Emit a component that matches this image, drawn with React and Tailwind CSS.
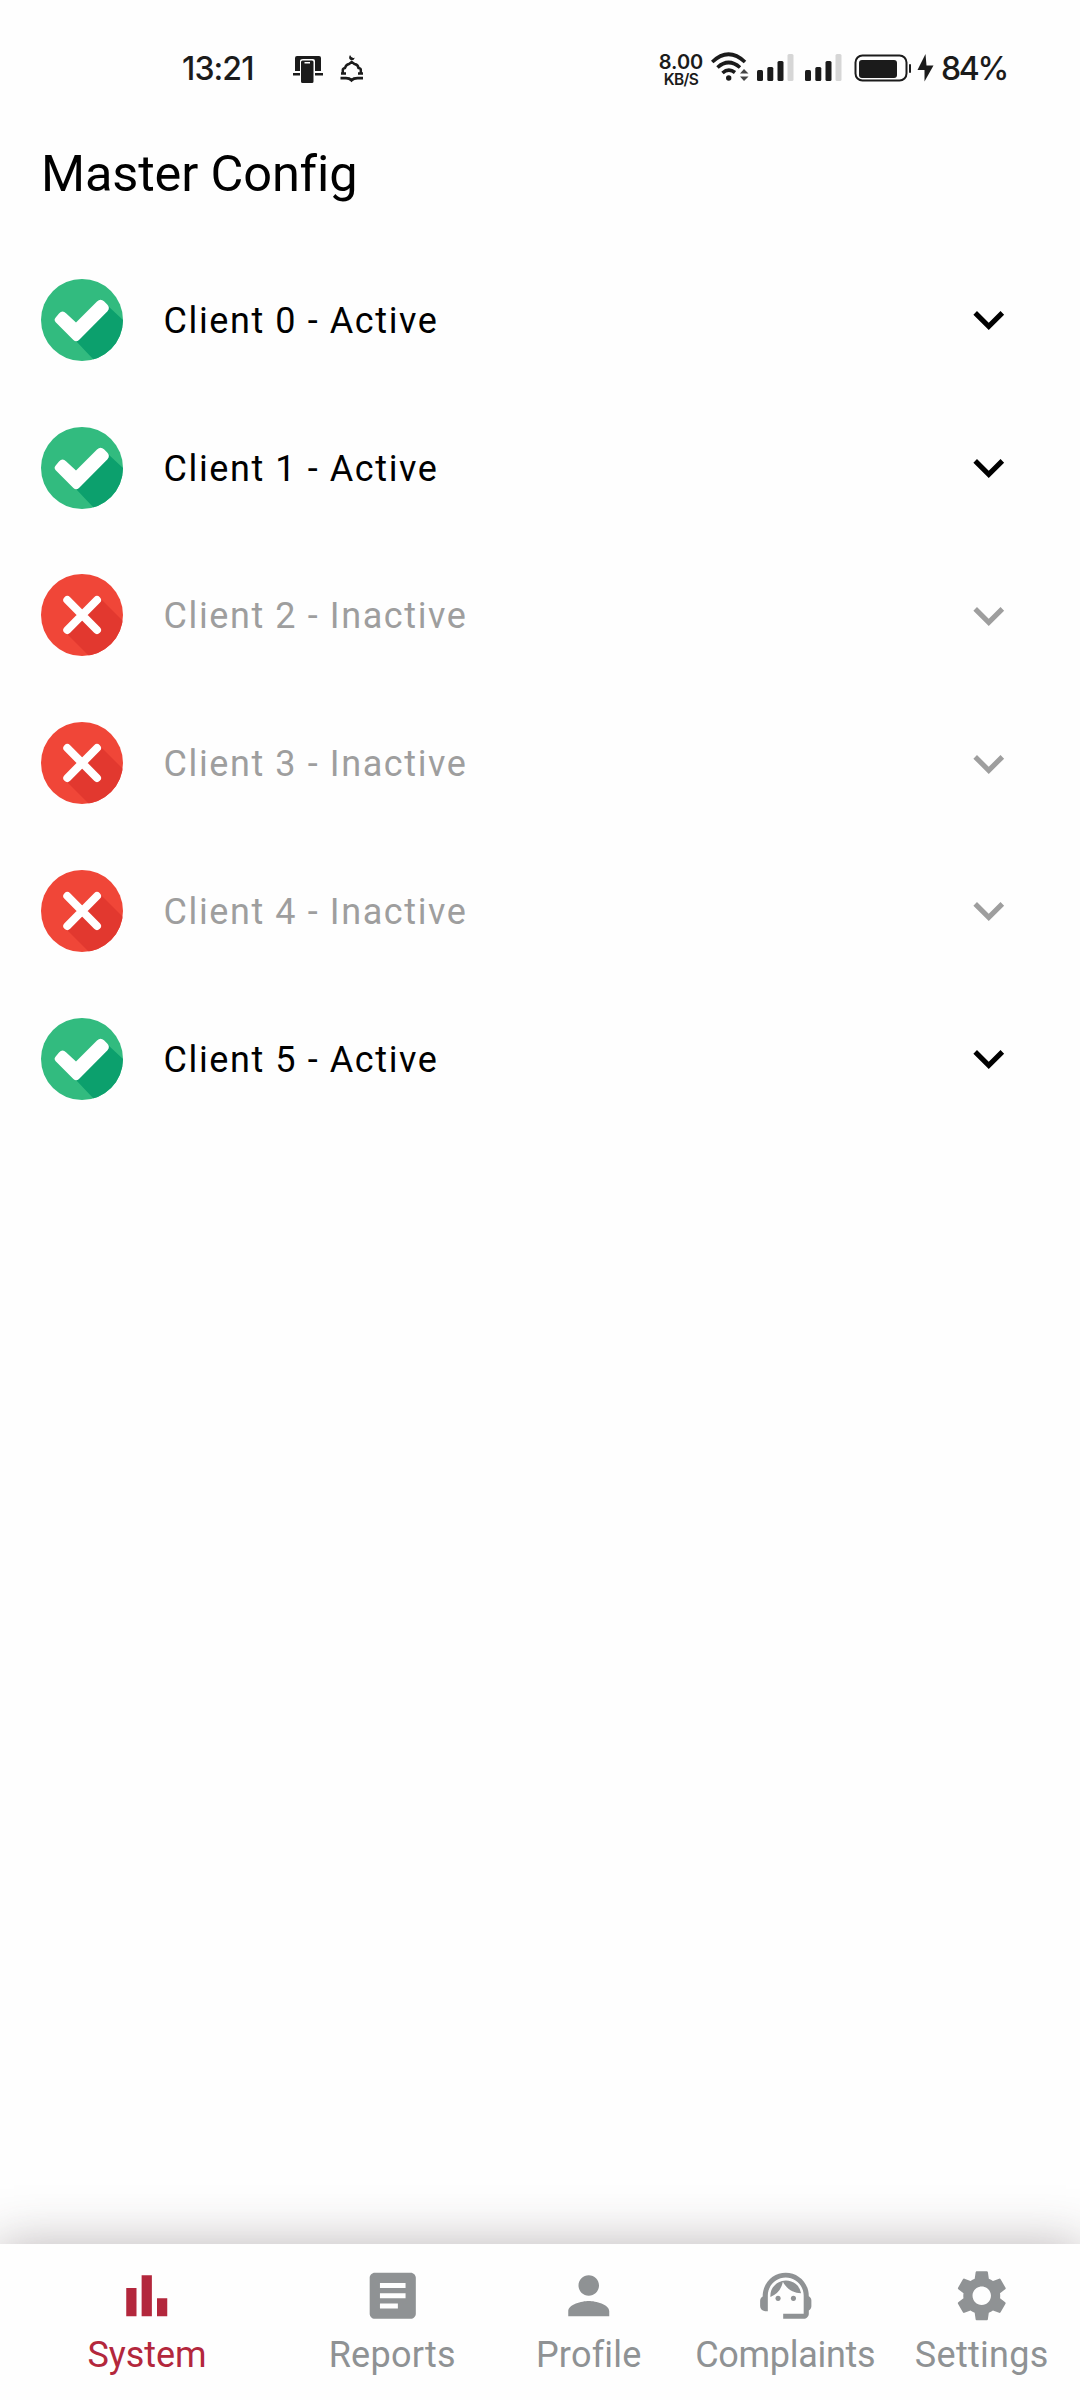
import React from "react";
import {
  MdArticle,
  MdBarChart,
  MdExpandMore,
  MdPerson,
  MdSettings,
  MdSupportAgent,
} from "react-icons/md";

const clients = [true, true, false, false, false, true];

const tabs = [
  { label: "System", Icon: MdBarChart, box: "w-[294px] text-[#b3273c]", text: "tracking-[-0.100px]" },
  { label: "Reports", Icon: MdArticle, box: "w-[196.5px]", text: "tracking-[0.250px]" },
  { label: "Profile", Icon: MdPerson, box: "w-[196.5px]", text: "tracking-[0.200px]" },
  { label: "Complaints", Icon: MdSupportAgent, box: "w-[196.5px]", text: "tracking-[-0.300px]" },
  { label: "Settings", Icon: MdSettings, box: "w-[196.5px]", text: "tracking-[0.300px]" },
];

function ActiveBadge() {
  return (
    <svg viewBox="0 0 82 82" className="size-[82px] shrink-0">
      <defs>
        <clipPath id="disc">
          <circle cx="41" cy="41" r="41" />
        </clipPath>
      </defs>
      <g clipPath="url(#disc)">
        <rect width="82" height="82" fill="#32bb7f" />
        <path d="M35 62L52 80L60 90L100 60L82 41L67 27Z" fill="#0ca06d" />
      </g>
      <path
        d="M14.700 43.2Q12.500 41 14.700 38.6L18 34.4Q21.500 30.8 25 34.2L35 43.5L56 22.5Q59.500 19 63 22.200L66 25.300Q69.500 28.800 66.500 32.200L38 61Q35.200 63.500 32.400 61Z"
        fill="#fff"
      />
    </svg>
  );
}

function InactiveBadge() {
  return (
    <svg viewBox="0 0 82 82" className="size-[82px] shrink-0">
      <defs>
        <clipPath id="disc-off">
          <circle cx="41" cy="41" r="41" />
        </clipPath>
      </defs>
      <g clipPath="url(#disc-off)">
        <rect width="82" height="82" fill="#f04638" />
        <path d="M25 59L48 82L90 90L90 55L59 24L41 41Z" fill="#e2382f" />
      </g>
      <path d="M26.300 26L56 56M56 26L26.300 56" stroke="#fff" strokeWidth="8" strokeLinecap="round" />
    </svg>
  );
}

function Signal() {
  return (
    <svg viewBox="0 0 38 28" className="h-[28px] w-[38px]">
      <rect x="0" y="16" width="6" height="11" rx="1.500" fill="#1b1b1b" />
      <rect x="10.300" y="13" width="6" height="14" rx="1.500" fill="#1b1b1b" />
      <rect x="20.500" y="7" width="6" height="20" rx="1.500" fill="#1b1b1b" />
      <rect x="30.500" y="0" width="6" height="27" rx="1.500" fill="#d6d6d6" />
    </svg>
  );
}

function StatusBar() {
  return (
    <header className="flex h-[138px] items-start pt-[46px] font-['Inter',sans-serif] text-[#1b1b1b]">
      <div className="ml-[182px] w-[111px] text-[32px] leading-[46px] font-medium tracking-[-0.9px] whitespace-nowrap">13:21</div>
      <svg viewBox="0 0 30 28" className="mt-[9px] h-[28px] w-[30px]" fill="#1b1b1b">
        <path d="M2 16V3Q2 1 4 1H26Q28 1 28 3V16H22V6Q22 4 20 4H10Q7 4 7 6V16Z" />
        <path d="M0 18H7V20.500H0ZM22 18H30V20.500H22Z" />
        <path fillRule="evenodd" d="M9.500 5.500H19Q20.500 5.500 20.500 7V26.500Q20.500 28 19 28H9.500Q8 28 8 26.500V7Q8 5.500 9.500 5.500ZM11.500 7V8.500H17V7Z" />
      </svg>
      <svg viewBox="0 0 24 28" className="mt-[9px] ml-[17px] h-[28px] w-[24px]" fill="none" stroke="#1b1b1b" strokeWidth="2.500">
        <path d="M1 18.500H6M2.800 18V15Q2.800 13.500 5 13Q6 9.500 9 9L11.700 7L14.500 9Q18 9.500 18.500 13Q21 13.500 20.800 15V18.500M18 18.500H23" />
        <path d="M0.500 23.200H6Q9.500 23.200 11.500 25.200Q13.500 23.200 17.500 23.200H23" strokeWidth="2.800" />
        <path d="M10 0Q7.800 3.700 11 5.300Q14 5.600 15 2.500Q12 4.400 10 0Z" fill="#1b1b1b" stroke="none" />
      </svg>
      <div className="ml-[294px] flex w-[46px] flex-col items-center pt-[6px] whitespace-nowrap">
        <span className="text-[20px] leading-[20px] font-semibold">8.00</span>
        <span className="text-[15.500px] leading-[15px] font-semibold tracking-[-0.600px]">KB/S</span>
      </div>
      <svg viewBox="0 0 38 30" className="mt-[6px] ml-[7px] h-[30px] w-[38px]" fill="none" stroke="#1b1b1b" strokeWidth="3.600">
        <path d="M1.200 10Q17.500 -5.500 34 10M6.500 15.500Q17.500 5.500 29 15.500M11.500 21Q17.500 15.500 24 20.500" />
        <circle cx="17.700" cy="26" r="2.700" fill="#1b1b1b" stroke="none" />
        <path d="M29 21.500L33 17L37.500 21.500ZM29 24.500H37.500L33 29Z" fill="#444" stroke="none" />
      </svg>
      <div className="mt-[8px] ml-[8px]"><Signal /></div>
      <div className="mt-[8px] ml-[10px]"><Signal /></div>
      <svg viewBox="0 0 58 29" className="mt-[8px] ml-[11px] h-[29px] w-[58px]">
        <rect x="1.500" y="1.500" width="51" height="25" rx="7" fill="none" stroke="#1b1b1b" strokeWidth="2" />
        <rect x="5" y="6" width="38" height="18" rx="3" fill="#1b1b1b" />
        <rect x="55" y="10" width="2" height="9" rx="1" fill="#1b1b1b" />
      </svg>
      <svg viewBox="0 0 18 28" className="mt-[8px] ml-[5px] h-[28px] w-[18px]" fill="#1b1b1b">
        <path d="M8.500 0L0.500 16H7.500V27.500L16.500 11.500H9.500Z" />
      </svg>
      <div className="ml-[6px] text-[32px] leading-[46px] font-medium tracking-[-2.300px] whitespace-nowrap">84%</div>
    </header>
  );
}

export default function App() {
  return (
    <div className="flex h-[2400px] w-[1080px] flex-col overflow-hidden bg-[#fefefe] font-['Roboto',sans-serif] text-black">
      <StatusBar />
      <main className="flex-1">
        <h1 className="ml-[41px] h-[108px] text-[50.500px] leading-[72px] font-normal tracking-[-0.150px] whitespace-nowrap">Master Config</h1>
        <ul>
          {clients.map((active, i) => (
            <li key={i} className={active ? "flex h-[147.800px] items-center pl-[40.500px]" : "flex h-[147.800px] items-center pl-[40.500px] text-[#9e9e9e]"}>
              {active ? <ActiveBadge /> : <InactiveBadge />}
              <span className="ml-[41px] flex-1 pt-[2px] text-[36px] tracking-[1.600px]">
                Client {i} - {active ? "Active" : "Inactive"}
              </span>
              <MdExpandMore className="mr-[61px] size-[61.500px]" />
            </li>
          ))}
        </ul>
      </main>
      <nav className="flex h-[156px] bg-[#fefefe] pt-[21px] text-[#8f9294] shadow-[0_6px_50px_4px_rgba(60,45,50,0.36)]">
        {tabs.map(({ label, Icon, box, text }) => (
          <div key={label} className={`${box} flex shrink-0 flex-col items-center`}>
            <Icon className="size-[61.500px] shrink-0" />
            <span className={`mt-[3px] text-[36px] leading-[50px] whitespace-nowrap ${text}`}>{label}</span>
          </div>
        ))}
      </nav>
    </div>
  );
}
